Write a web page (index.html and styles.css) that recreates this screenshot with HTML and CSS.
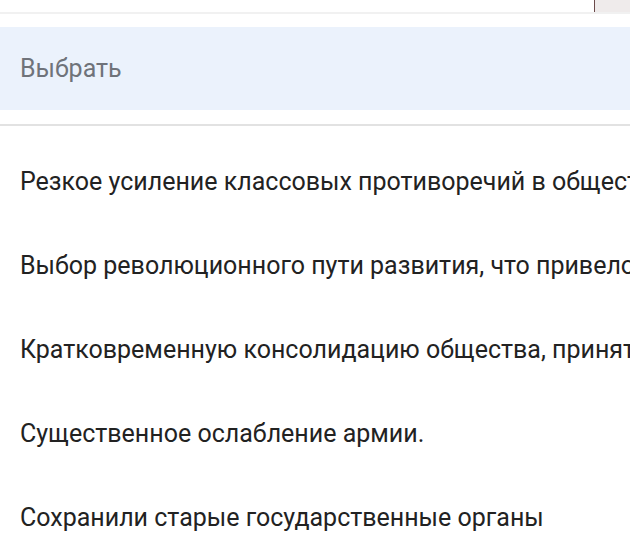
FILE: index.html
```html
<!DOCTYPE html>
<html lang="ru">
<head>
  <meta charset="UTF-8">
  <meta name="viewport" content="width=device-width, initial-scale=1.0">
  <title>Выбрать</title>
  <link rel="stylesheet" href="styles.css">
</head>
<body>
  <div class="topbar">
    <div class="corner"></div>
  </div>

  <div class="select">
    <span class="placeholder">Выбрать</span>
  </div>

  <ul class="options">
    <li class="option">Резкое усиление классовых противоречий в обществе</li>
    <li class="option">Выбор революционного пути развития, что привело к гражданской войне</li>
    <li class="option">Кратковременную консолидацию общества, принятие законов</li>
    <li class="option">Существенное ослабление армии.</li>
    <li class="option">Сохранили старые государственные органы</li>
  </ul>
</body>
</html>
```

FILE: styles.css
```css
body {
  margin: 0;
  background-color: #fff;
  font-family: Roboto, "Liberation Sans", Arial, sans-serif;
  overflow: hidden;
}
.topbar {
  height: 12px;
  display: flex;
  justify-content: flex-end;
  border-bottom: 2px solid #f1f1f1;
}
.corner {
  width: 35px;
  border-left: 1px solid #6b4a4a;
  background-color: #efebeb;
}
.select {
  margin-top: 13px;
  height: 83px;
  display: flex;
  align-items: center;
  padding-left: 20px;
  background-color: #ebf2fc;
}
.placeholder {
  font-size: 25px;
  color: #6f737a;
}
.options {
  list-style: none;
  margin: 14px 0 0;
  padding: 0;
  border-top: 2px solid #e2e2e2;
  padding-top: 14px;
  overflow: hidden;
}
.option {
  height: 84px;
  line-height: 84px;
  padding-left: 20px;
  font-size: 25px;
  color: #222;
  white-space: nowrap;
  overflow: hidden;
}
```
